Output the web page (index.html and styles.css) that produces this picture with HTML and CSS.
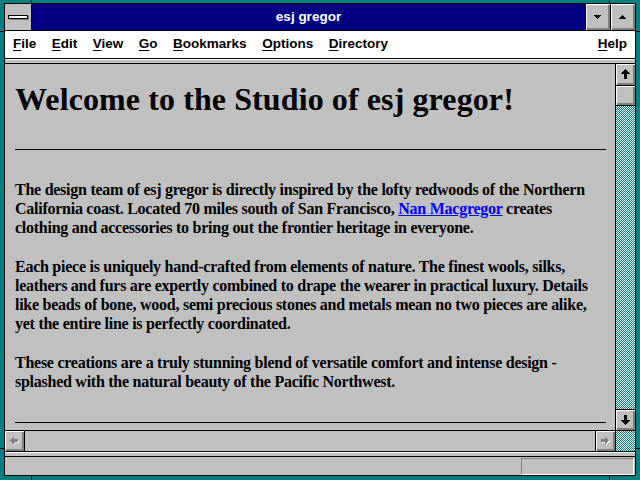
FILE: index.html
```html
<!DOCTYPE html>
<html>
<head>
<meta charset="utf-8">
<title>esj gregor</title>
<link rel="stylesheet" href="styles.css">
</head>
<body>
<div class="win">
  <div class="titlebar">
    <div class="sysbox"><span class="sysbar"></span></div>
    <div class="title">esj gregor</div>
    <div class="tbtn">
      <svg width="7" height="4" viewBox="0 0 7 4" shape-rendering="crispEdges"><rect x="0" y="0" width="7" height="1"/><rect x="1" y="1" width="5" height="1"/><rect x="2" y="2" width="3" height="1"/><rect x="3" y="3" width="1" height="1"/></svg>
    </div>
    <div class="tbtn">
      <svg width="7" height="4" viewBox="0 0 7 4" shape-rendering="crispEdges"><rect x="3" y="0" width="1" height="1"/><rect x="2" y="1" width="3" height="1"/><rect x="1" y="2" width="5" height="1"/><rect x="0" y="3" width="7" height="1"/></svg>
    </div>
  </div>
  <div class="menubar">
    <span class="mi"><u>F</u>ile</span>
    <span class="mi"><u>E</u>dit</span>
    <span class="mi"><u>V</u>iew</span>
    <span class="mi"><u>G</u>o</span>
    <span class="mi"><u>B</u>ookmarks</span>
    <span class="mi"><u>O</u>ptions</span>
    <span class="mi"><u>D</u>irectory</span>
    <span class="spacer"></span>
    <span class="mi"><u>H</u>elp</span>
  </div>
  <div class="band"></div>
  <div class="main">
    <div class="left">
      <div class="viewport">
        <h1>Welcome to the Studio of esj gregor!</h1>
        <hr class="rule first">
        <p>The design team of esj gregor is directly inspired by the lofty redwoods of the Northern<br>California coast. Located 70 miles south of San Francisco, <a href="#">Nan Macgregor</a> creates<br>clothing and accessories to bring out the frontier heritage in everyone.</p>
        <p>Each piece is uniquely hand-crafted from elements of nature. The finest wools, silks,<br>leathers and furs are expertly combined to drape the wearer in practical luxury. Details<br>like beads of bone, wood, semi precious stones and metals mean no two pieces are alike,<br>yet the entire line is perfectly coordinated.</p>
        <p>These creations are a truly stunning blend of versatile comfort and intense design -<br>splashed with the natural beauty of the Pacific Northwest.</p>
        <hr class="rule last">
      </div>
      <div class="hscroll">
        <div class="hbtn lbtn">
          <svg width="10" height="9" viewBox="0 0 10 9" shape-rendering="crispEdges">
            <g fill="#fff"><rect x="4" y="7" width="1" height="1"/><rect x="5" y="5" width="4" height="1"/><rect x="8" y="3" width="1" height="2"/></g>
            <g fill="#808080"><rect x="0" y="3" width="1" height="1"/><rect x="1" y="2" width="1" height="3"/><rect x="2" y="1" width="1" height="5"/><rect x="3" y="0" width="1" height="7"/><rect x="4" y="2" width="4" height="3"/></g>
          </svg>
        </div>
        <div class="htrack"></div>
        <div class="hbtn rbtn">
          <svg width="10" height="9" viewBox="0 0 10 9" shape-rendering="crispEdges">
            <g fill="#fff"><rect x="5" y="7" width="1" height="1"/><rect x="6" y="5" width="1" height="2"/><rect x="7" y="4" width="1" height="2"/><rect x="8" y="3" width="1" height="2"/><rect x="1" y="5" width="4" height="1"/></g>
            <g fill="#808080"><rect x="7" y="3" width="1" height="1"/><rect x="6" y="2" width="1" height="3"/><rect x="5" y="1" width="1" height="5"/><rect x="4" y="0" width="1" height="7"/><rect x="0" y="2" width="4" height="3"/></g>
          </svg>
        </div>
      </div>
    </div>
    <div class="vscroll">
      <div class="vbtn up">
        <svg width="9" height="10" viewBox="0 0 9 10" shape-rendering="crispEdges"><rect x="4" y="0" width="1" height="1"/><rect x="3" y="1" width="3" height="1"/><rect x="2" y="2" width="5" height="1"/><rect x="1" y="3" width="7" height="1"/><rect x="0" y="4" width="9" height="1"/><rect x="3" y="5" width="3" height="5"/></svg>
      </div>
      <div class="thumb"></div>
      <div class="vtrack"></div>
      <div class="vbtn down">
        <svg width="9" height="10" viewBox="0 0 9 10" shape-rendering="crispEdges"><rect x="3" y="0" width="3" height="5"/><rect x="0" y="5" width="9" height="1"/><rect x="1" y="6" width="7" height="1"/><rect x="2" y="7" width="5" height="1"/><rect x="3" y="8" width="3" height="1"/><rect x="4" y="9" width="1" height="1"/></svg>
      </div>
      <div class="corner"></div>
    </div>
  </div>
  <div class="band"></div>
  <div class="status"><div class="sbox"></div></div>
</div>
<div class="tick tv t1"></div>
<div class="tick tv t2"></div>
<div class="tick tv t3"></div>
<div class="tick tv t4"></div>
<div class="tick th t5"></div>
<div class="tick th t6"></div>
<div class="tick th t7"></div>
<div class="tick th t8"></div>
</body>
</html>
```
FILE: styles.css
```css
html, body {
  margin: 0;
  width: 640px;
  height: 480px;
  overflow: hidden;
}
body {
  background: #008080;
  padding: 3px 4px 4px 4px;
  box-sizing: border-box;
  position: relative;
}
.win {
  border: 1px solid #000;
  height: 473px;
  box-sizing: border-box;
  display: flex;
  flex-direction: column;
  background: #c0c0c0;
}
.titlebar {
  height: 26px;
  border-bottom: 1px solid #000;
  display: flex;
  flex: none;
}
.sysbox {
  width: 26px;
  border-right: 1px solid #000;
  background: #c0c0c0;
  display: flex;
  align-items: center;
  justify-content: center;
}
.sysbar {
  display: block;
  width: 18px;
  height: 2px;
  background: #fff;
  border: 1px solid #000;
  box-shadow: 1px 1px 0 #808080;
  margin-top: -1px;
}
.title {
  flex: 1;
  background: #000080;
  color: #fff;
  font: bold 13.5px "Liberation Sans", Arial, sans-serif;
  line-height: 26px;
  text-align: center;
}
.tbtn {
  width: 24px;
  border-left: 1px solid #000;
  background: #c0c0c0;
  box-shadow: inset 1px 1px 0 #fff, inset -1px -1px 0 #808080, inset -2px -2px 0 #808080;
  display: flex;
  align-items: center;
  justify-content: center;
}
.tbtn svg { margin: 0 1px 1px 0; }
.menubar {
  height: 27px;
  background: #fff;
  border-bottom: 1px solid #000;
  display: flex;
  flex: none;
  gap: 15.5px;
  padding: 0 8px;
  box-sizing: content-box;
  font: bold 13.5px "Liberation Sans", Arial, sans-serif;
  line-height: 25px;
  color: #000;
}
.mi u { text-underline-offset: 2px; }
.spacer { flex: 1; }
.band {
  height: 3px;
  border-top: 1px solid #fff;
  border-bottom: 1px solid #000;
  flex: none;
}
.main {
  flex: 1;
  display: flex;
  min-height: 0;
}
.left {
  flex: 1;
  display: flex;
  flex-direction: column;
  min-width: 0;
}
.viewport {
  flex: 1;
  overflow: hidden;
  padding: 0 9px 0 10px;
  font-family: "Liberation Serif", "Times New Roman", serif;
  color: #000;
}
h1 {
  font-size: 32px;
  font-weight: bold;
  line-height: 37px;
  letter-spacing: 0.1px;
  margin: 17px 0 0 0;
}
.rule {
  border: 0;
  border-top: 1px solid #000;
  height: 0;
  margin: 0;
}
.rule.first { margin-top: 31px; }
.rule.last { margin-top: 31px; }
p {
  font-size: 16px;
  font-weight: bold;
  line-height: 19px;
  letter-spacing: -0.26px;
  white-space: nowrap;
  margin: 20px 0 0 0;
}
.rule.first + p { margin-top: 30px; }
a { color: #0000ff; text-decoration: underline; }
.hscroll {
  height: 20px;
  border-top: 1px solid #000;
  border-bottom: 1px solid #000;
  display: flex;
  flex: none;
}
.hbtn {
  width: 19px;
  background: #c0c0c0;
  box-shadow: inset 1px 1px 0 #fff, inset -1px -1px 0 #808080, inset -2px -2px 0 #808080;
  display: flex;
  align-items: center;
  justify-content: center;
}
.lbtn { border-right: 1px solid #000; }
.rbtn { border-left: 1px solid #000; }
.htrack { flex: 1; background: #c0c0c0; }
.vscroll {
  width: 19px;
  border-left: 1px solid #000;
  border-bottom: 1px solid #000;
  display: flex;
  flex-direction: column;
  flex: none;
}
.vbtn, .thumb {
  background: #c0c0c0;
  box-shadow: inset 1px 1px 0 #fff, inset -1px -1px 0 #808080, inset -2px -2px 0 #808080;
  display: flex;
  align-items: center;
  justify-content: center;
  flex: none;
}
.vbtn.up { height: 21px; border-bottom: 1px solid #000; }
.thumb { height: 19px; border-bottom: 1px solid #000; }
.vbtn.down { height: 20px; border-top: 1px solid #000; border-bottom: 1px solid #000; }
.vbtn svg { margin: 0 1px 1px 0; }
.vtrack, .corner {
  background-color: #fff;
  background-image: conic-gradient(#008080 25%, #ffffff 0 50%, #008080 0 75%, #ffffff 0);
  background-size: 2px 2px;
}
.vtrack { flex: 1; }
.corner { height: 20px; flex: none; }
.status {
  height: 18px;
  flex: none;
  display: flex;
  justify-content: flex-end;
  padding-top: 1px;
  box-sizing: border-box;
}
.sbox {
  width: 113px;
  height: 17px;
  box-sizing: border-box;
  border-top: 1px solid #808080;
  border-left: 1px solid #808080;
  border-bottom: 1px solid #fff;
  border-right: 1px solid #fff;
  margin-right: 1px;
}
.tick { position: absolute; background: #000; }
.tv { width: 1px; height: 4px; }
.th { width: 4px; height: 1px; }
.t1 { left: 31px; top: 0; height: 3px; }
.t2 { left: 609px; top: 0; height: 3px; }
.t3 { left: 31px; top: 476px; }
.t4 { left: 609px; top: 476px; }
.t5 { left: 0; top: 31px; }
.t6 { left: 636px; top: 31px; }
.t7 { left: 0; top: 448px; }
.t8 { left: 636px; top: 448px; }
```
